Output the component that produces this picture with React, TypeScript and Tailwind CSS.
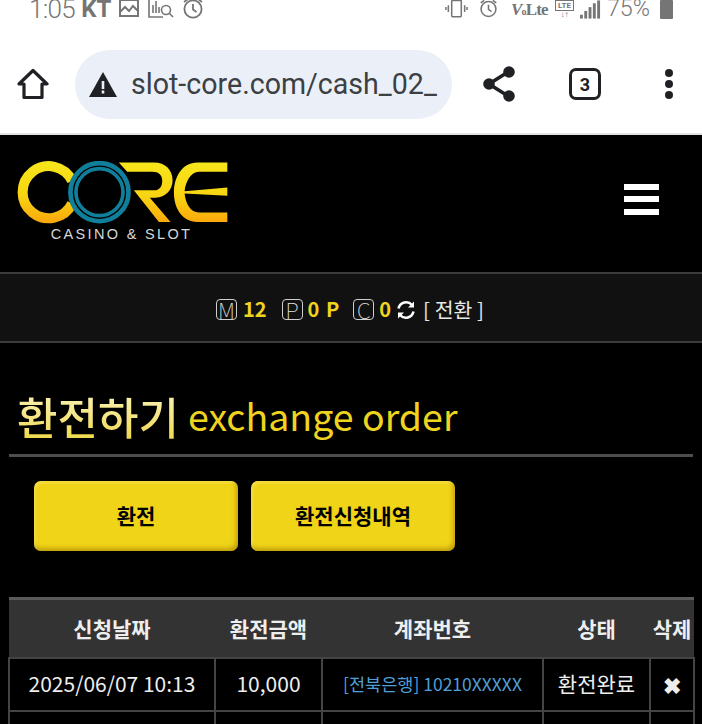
const krFont = "font-['Noto_Sans_CJK_KR','Noto_Sans',sans-serif]";

const StatusBar = () => {
  return (
    <div className="h-[42px] overflow-hidden bg-white font-['Roboto',sans-serif] text-[#757575]">
      <div className="h-[18px] flex items-center justify-between pl-[29px] pr-[29px]">
        <div className="flex items-center">
          <span className="text-[26px] leading-none font-light tracking-tight">1:05</span>
          <span className="ml-[6px] text-[24px] leading-none font-bold">KT</span>
          <svg className="ml-[8px]" width="20" height="20" viewBox="0 0 20 20" fill="none" stroke="#757575" strokeWidth="2">
            <rect x="1" y="1" width="18" height="16" />
            <path d="M1 13l5-5 4 4 4-5 5 5" />
          </svg>
          <svg className="ml-[9px]" width="26" height="20" viewBox="0 0 26 20" fill="none" stroke="#757575" strokeWidth="1.6">
            <path d="M1 0v18h14" />
            <path d="M5 14V6M8 14V2M11 14V8" />
            <circle cx="18" cy="11" r="4.5" />
            <path d="M21 14l4 4" />
          </svg>
          <svg className="ml-[8px]" width="22" height="22" viewBox="0 0 22 22" fill="none" stroke="#757575" strokeWidth="1.8">
            <circle cx="11" cy="11" r="8.6" />
            <path d="M11 6v5.5l3.5 2.5" />
            <path d="M2 4l4-3M20 4l-4-3" />
          </svg>
        </div>
        <div className="flex items-center">
          <svg width="23" height="18" viewBox="0 0 24 18" fill="none" stroke="#757575" strokeWidth="1.6">
            <rect x="7" y="0" width="10" height="17" rx="1" />
            <path d="M3.5 5v7M20.5 5v7M1 7v3M23 7v3" />
          </svg>
          <svg className="ml-[11px]" width="19" height="20" viewBox="0 0 22 22" fill="none" stroke="#757575" strokeWidth="1.8">
            <circle cx="11" cy="11" r="8.6" />
            <path d="M11 6v5.5l3.5 2.5" />
            <path d="M2 4l4-3M20 4l-4-3" />
          </svg>
          <span className="ml-[13px] w-[34px] whitespace-nowrap text-[17px] leading-none font-bold font-['Liberation_Serif',serif] tracking-tighter">
            <span className="italic">V</span>
            <span className="text-[10px]">o</span>
            Lte
          </span>
          <div className="ml-[10px] flex flex-col items-center">
            <span className="text-[8px] leading-[9px] font-bold border border-[#757575] px-[2px]">LTE</span>
            <span className="text-[8px] leading-[8px] font-bold">↓↑</span>
          </div>
          <svg className="ml-[6px]" width="21" height="19" viewBox="0 0 22 19" fill="#757575">
            <rect x="0" y="15" width="3" height="4" />
            <rect x="4.5" y="11" width="3" height="8" />
            <rect x="9" y="7" width="3" height="12" />
            <rect x="13.5" y="3" width="3" height="16" />
            <rect x="18" y="0" width="3" height="19" />
          </svg>
          <span className="ml-[6px] text-[23.3px] leading-none font-light">75%</span>
          <div className="ml-[10px] w-[13px] h-[19px] bg-[#757575] rounded-[1px]" />
        </div>
      </div>
    </div>
  );
};

const BrowserBar = () => {
  return (
    <div className="h-[93px] bg-white border-b-2 border-[#e3e3e3] flex items-center pb-[7px] font-['Roboto',sans-serif]">
      <svg className="ml-[17px]" width="32" height="32" viewBox="0 0 32 32" fill="none" stroke="#202124" strokeWidth="3.2" strokeLinejoin="round">
        <path d="M2 16 16 2.5 30 16h-5v13.5H7V16z" />
      </svg>
      <div className="ml-[26px] w-[377px] h-[69px] rounded-full bg-[#ebf0f8] flex items-center pl-[14px] overflow-hidden">
        <svg width="28" height="25" viewBox="0 0 28 25">
          <path d="M14 0 28 25H0z" fill="#202124" />
          <path d="M12.7 9h2.6v8h-2.6zM12.7 18.5h2.6v3h-2.6z" fill="#ebf0f8" />
        </svg>
        <span className="ml-[14px] text-[28.6px] leading-none text-[#3c4043] whitespace-nowrap">slot-core.com/cash_02_</span>
      </div>
      <svg className="ml-[31px]" width="32" height="36" viewBox="0 0 32 36" fill="#202124" stroke="#202124" strokeWidth="3.6">
        <path d="M25 6 6 18l19 12" fill="none" />
        <circle cx="26" cy="6" r="4" />
        <circle cx="6" cy="18" r="4" />
        <circle cx="26" cy="30" r="4" />
      </svg>
      <div className="ml-[54px] w-[32px] h-[32px] rounded-[7px] border-[3px] border-[#202124] flex items-center justify-center text-[18px] font-bold text-[#202124]">3</div>
      <div className="ml-[64px] flex flex-col gap-[3.5px]">
        <div className="w-[7.5px] h-[7.5px] rounded-full bg-[#202124]" />
        <div className="w-[7.5px] h-[7.5px] rounded-full bg-[#202124]" />
        <div className="w-[7.5px] h-[7.5px] rounded-full bg-[#202124]" />
      </div>
    </div>
  );
};

const Logo = () => {
  return (
    <svg width="211" height="63" viewBox="50 78 632 188" fill="none">
      <defs>
        <linearGradient id="logoGold" gradientUnits="userSpaceOnUse" x1="0" y1="78" x2="0" y2="264">
          <stop offset="0" stopColor="#f7e61c" />
          <stop offset="0.55" stopColor="#f8d512" />
          <stop offset="1" stopColor="#fba70b" />
        </linearGradient>
      </defs>
      <path d="M215 137A78 78 0 1 0 215 205" stroke="url(#logoGold)" strokeWidth="30" />
      <path d="M355 82H460C495 82 516 105 516 135C516 165 495 185 465 188L448 188L510 260H475L400 165H455C475 168 485 155 485 138C485 120 475 110 455 110H380Z" fill="url(#logoGold)" />
      <path d="M680 82H590C545 82 520 125 520 172C520 220 545 260 590 260H680V232H595C570 232 555 205 552 175L680 182V157L552 168C555 140 570 110 595 110H680Z" fill="url(#logoGold)" />
      <circle cx="297" cy="171" r="87" stroke="#0f7f9b" strokeWidth="14" />
      <circle cx="297" cy="171" r="70.5" stroke="#0f7f9b" strokeWidth="11" />
    </svg>
  );
};

const Header = () => {
  return (
    <div className="h-[137px] bg-black flex items-start justify-between pl-[17px] pr-[43px]">
      <div className="pt-[26px] flex flex-col items-center w-[211px]">
        <Logo />
        <span className="mt-[2px] -ml-[2px] text-[14.5px] leading-[17px] tracking-[0.16em] text-[#d8d8d8] font-['Liberation_Sans',sans-serif]">CASINO &amp; SLOT</span>
      </div>
      <div className="mt-[48.5px] w-[35px] flex flex-col gap-[6.5px]">
        <div className="h-[6px] bg-white" />
        <div className="h-[6px] bg-white" />
        <div className="h-[6px] bg-white" />
      </div>
    </div>
  );
};

const Badge = ({ letter }: { letter: string }) => {
  return (
    <span className="w-[21px] h-[21px] rounded-[4px] border border-[#cfcfcf] flex items-center justify-center text-[22px] leading-none font-thin text-[#e5e5e5] font-['Noto_Sans_CJK_KR',sans-serif]">
      {letter}
    </span>
  );
};

const PointBar = () => {
  return (
    <div className="h-[71px] bg-[#111111] border-y-2 border-[#3c3c3c] flex items-center pl-[216px] pt-[3px] text-[20px]">
      <Badge letter="M" />
      <span className="ml-[6px] font-bold text-[#eed41e]">12</span>
      <span className="ml-[15px]"><Badge letter="P" /></span>
      <span className="ml-[5px] font-bold text-[#eed41e] tracking-[0.05em]">0 P</span>
      <span className="ml-[13px]"><Badge letter="C" /></span>
      <span className="ml-[5px] font-bold text-[#eed41e]">0</span>
      <svg className="ml-[5px] mt-[2px]" width="20" height="20" viewBox="0 0 20 20" fill="none" stroke="#fff" strokeWidth="2.6">
        <path d="M2.5 8.5A7.8 7.8 0 0 1 16 5" />
        <path d="M17.5 11.5A7.8 7.8 0 0 1 4 15" />
        <path d="M18 1.5v6h-6z" fill="#fff" stroke="none" />
        <path d="M2 18.5v-6h6z" fill="#fff" stroke="none" />
      </svg>
      <span className="ml-[7px] text-[20.5px] text-[#e8e8e8]">[ 전환 ]</span>
    </div>
  );
};

const ActionButton = ({ label }: { label: string }) => {
  return (
    <button className="w-[204px] h-[70px] rounded-[7px] bg-[#f0d417] shadow-[inset_-2px_-3px_4px_rgba(150,110,0,0.5),inset_2px_2px_3px_rgba(255,240,120,0.5)] text-[21px] font-bold text-black">
      {label}
    </button>
  );
};

const ExchangeTable = () => {
  const th = "border-t-[3px] border-[#5a5a5a] bg-[#333333] h-[59px] text-[21px] font-bold text-[#eeeeee] p-0 align-middle";
  const td = "border-2 border-[#444444] h-[53px] p-0 text-center align-middle";
  return (
    <table className="table-fixed border-collapse w-[685px] ml-[8px]">
      <colgroup>
        <col className="w-[206px]" />
        <col className="w-[107px]" />
        <col className="w-[221px]" />
        <col className="w-[107px]" />
        <col className="w-[44px]" />
      </colgroup>
      <thead>
        <tr>
          <th className={th}>신청날짜</th>
          <th className={th}>환전금액</th>
          <th className={th}>계좌번호</th>
          <th className={th}>상태</th>
          <th className={`${th} whitespace-nowrap`}>삭제</th>
        </tr>
      </thead>
      <tbody className="text-[21px] text-[#eeeeee]">
        <tr>
          <td className={td}>2025/06/07 10:13</td>
          <td className={td}>10,000</td>
          <td className={`${td} text-[17.5px] text-[#509fd8]`}>[전북은행] 10210XXXXX</td>
          <td className={td}>환전완료</td>
          <td className={`${td} text-[22px] font-bold`}>✖</td>
        </tr>
        <tr>
          <td className={td}></td>
          <td className={td}></td>
          <td className={td}></td>
          <td className={td}></td>
          <td className={td}></td>
        </tr>
      </tbody>
    </table>
  );
};

const App = () => {
  return (
    <div className={`w-[702px] h-[724px] overflow-hidden bg-black ${krFont}`}>
      <StatusBar />
      <BrowserBar />
      <Header />
      <PointBar />
      <div className="mx-[9px] h-[114px] border-b-[3px] border-[#4d4d4d] flex items-center pt-[34px] pl-[8px]">
        <span className="text-[44px] font-medium bg-gradient-to-b from-[#fdf6c4] to-[#eed41e] bg-clip-text text-transparent">환전하기</span>
        <span className="ml-[9px] text-[37.5px] text-[#eed41e]">exchange order</span>
      </div>
      <div className="pt-[24px] pl-[34px] flex gap-[13px]">
        <ActionButton label="환전" />
        <ActionButton label="환전신청내역" />
      </div>
      <div className="pt-[46px]">
        <ExchangeTable />
      </div>
    </div>
  );
};

export default App;
